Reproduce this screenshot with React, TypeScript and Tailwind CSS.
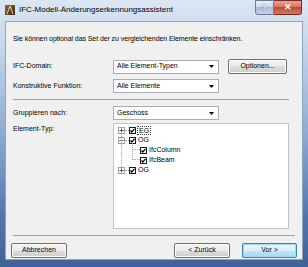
import React from "react";

const font = "font-['Liberation_Sans',Arial,sans-serif]";

function Select({ value, className = "" }: { value: string; className?: string }) {
  return (
    <div
      className={`flex h-[14px] items-center justify-between border border-[#abadb3] bg-white pl-[3px] pr-[4px] text-[7px] text-black ${className}`}
    >
      <span>{value}</span>
      <svg width="5" height="3" viewBox="0 0 5 3">
        <path d="M0 0h5L2.5 3z" fill="#000" />
      </svg>
    </div>
  );
}

function Button({ label, focused = false, className = "" }: { label: string; focused?: boolean; className?: string }) {
  return (
    <div
      className={`flex h-[15px] items-center justify-center rounded-[2px] border text-[7px] text-black ${
        focused
          ? "border-[#3c7fb1] bg-[linear-gradient(to_bottom,#eaf6fd,#d9f0fc_50%,#bee6fd_50%,#a7d9f5)] shadow-[inset_0_0_0_1px_#9ddcf9]"
          : "border-[#707070] bg-[linear-gradient(to_bottom,#f2f2f2,#ebebeb_50%,#dddddd_50%,#cfcfcf)] shadow-[inset_0_0_0_1px_#fcfcfc]"
      } ${className}`}
    >
      {label}
    </div>
  );
}

function Check() {
  return (
    <span className="flex h-[7px] w-[7px] shrink-0 items-center justify-center border border-[#1c1c1c] bg-white">
      <svg width="5" height="5" viewBox="0 0 5 5">
        <path d="M0.5 2.5l1.3 1.5L4.5 0.8" stroke="#000" strokeWidth="1.2" fill="none" />
      </svg>
    </span>
  );
}

function Expander({ open }: { open: boolean }) {
  return (
    <span className="flex h-[7px] w-[7px] shrink-0 items-center justify-center border border-[#a0a0a0] bg-white">
      <svg width="5" height="5" viewBox="0 0 5 5">
        <path d="M0.5 2.5h4" stroke="#555" strokeWidth="1" />
        {!open && <path d="M2.5 0.5v4" stroke="#555" strokeWidth="1" />}
      </svg>
    </span>
  );
}

function Tree() {
  return (
    <div className="relative ml-[100px] h-[106px] w-[176px] border border-[#c4c4c4] bg-white text-[7px] text-black">
      {/* dotted guide lines */}
      <div className="absolute left-[7px] top-[9px] h-[36px] border-l border-dotted border-[#a0a0a0]" />
      <div className="absolute left-[18px] top-[19px] h-[17px] border-l border-dotted border-[#a0a0a0]" />
      <div className="absolute left-[18px] top-[25px] w-[8px] border-t border-dotted border-[#a0a0a0]" />
      <div className="absolute left-[18px] top-[35px] w-[8px] border-t border-dotted border-[#a0a0a0]" />
      <div className="flex flex-col pt-[1px]">
        <div className="flex h-[10px] items-center pl-[4px]">
          <Expander open={false} />
          <span className="w-[4px] border-t border-dotted border-[#a0a0a0]" />
          <Check />
          <span className="ml-[1px] inline-flex h-[9px] items-center border border-dotted border-[#444] px-[1px] leading-none">
            EG
          </span>
        </div>
        <div className="flex h-[10px] items-center pl-[4px]">
          <Expander open={true} />
          <span className="w-[4px] border-t border-dotted border-[#a0a0a0]" />
          <Check />
          <span className="ml-[2px]">OG</span>
        </div>
        <div className="flex h-[10px] items-center pl-[26px]">
          <Check />
          <span className="ml-[2px]">IfcColumn</span>
        </div>
        <div className="flex h-[10px] items-center pl-[26px]">
          <Check />
          <span className="ml-[2px]">IfcBeam</span>
        </div>
        <div className="flex h-[10px] items-center pl-[4px]">
          <Expander open={false} />
          <span className="w-[4px] border-t border-dotted border-[#a0a0a0]" />
          <Check />
          <span className="ml-[2px]">OG</span>
        </div>
      </div>
    </div>
  );
}

export default function App() {
  return (
    <div
      className={`flex h-[267px] w-[308px] flex-col overflow-hidden bg-[linear-gradient(to_bottom,#dbe6f2,#c9d9ec_15%,#8fabd3_50%,#5478ae_80%,#3f6197)] ${font}`}
    >
      {/* title bar */}
      <div className="flex h-[21px] items-start">
        <div className="mt-[5px] ml-[5px] h-[10px] w-[10px] bg-[linear-gradient(135deg,#8a6a3a,#3b2a14)]">
          <svg width="10" height="10" viewBox="0 0 10 10">
            <path d="M2 9L5 1l3 8" stroke="#e8d2a0" strokeWidth="1" fill="none" />
          </svg>
        </div>
        <span className="mt-[4px] ml-[4px] text-[8px] text-black">IFC-Modell-Änderungserkennungsassistent</span>
        <div className="ml-auto mr-[6px] flex">
          <div className="flex h-[15px] w-[19px] items-center justify-center rounded-bl-[3px] border border-[#6d7c92] bg-[linear-gradient(to_bottom,#e9eef5,#c8d5e6_50%,#a9bcd6_50%,#c3d2e6)] text-[8px] font-bold text-white [text-shadow:0_0_2px_#345]">
            ?
          </div>
          <div className="flex h-[15px] w-[28px] items-center justify-center rounded-br-[3px] border border-l-0 border-[#7a2a22] bg-[linear-gradient(to_bottom,#e8a493,#d4725e_50%,#c14a32_50%,#d07b5f)] text-[9px] font-bold text-white">
            ✕
          </div>
        </div>
      </div>

      {/* client area */}
      <div className="mx-[5px] flex h-[239px] flex-col border border-[#8ea3c0] bg-[#f0f0f0] pl-[7px] pr-[13px] text-[7px] text-black">
        <p className="mt-[12px] h-[10px] leading-[10px] tracking-[-0.08px]">
          Sie können optional das Set der zu vergleichenden Elemente einschränken.
        </p>

        <div className="mt-[15px] flex items-center">
          <span className="w-[100px]">IFC-Domain:</span>
          <Select value="Alle Element-Typen" className="w-[106px]" />
          <Button label="Optionen..." className="ml-[9px] w-[59px]" />
        </div>
        <div className="mt-[5px] flex items-center">
          <span className="w-[100px]">Konstruktive Funktion:</span>
          <Select value="Alle Elemente" className="w-[106px]" />
        </div>

        <div className="mt-[6px] h-[1px] border-t border-[#a0a0a0] border-b-white" />

        <div className="mt-[6px] flex items-center">
          <span className="w-[100px]">Gruppieren nach:</span>
          <Select value="Geschoss" className="w-[106px]" />
        </div>

        <div className="mt-[3px] flex items-start">
          <span className="-mr-[100px] mt-[1px] w-[100px]">Element-Typ:</span>
          <Tree />
        </div>

        <div className="-mr-[6px] mt-[6px] border-t border-[#a0a0a0]" />

        <div className="-ml-[2px] -mr-[8px] mt-[7px] flex items-center">
          <Button label="Abbrechen" className="w-[56px]" />
          <Button label="< Zurück" className="ml-auto w-[56px]" />
          <Button label="Vor >" focused className="ml-[12px] w-[55px]" />
        </div>
      </div>
    </div>
  );
}
